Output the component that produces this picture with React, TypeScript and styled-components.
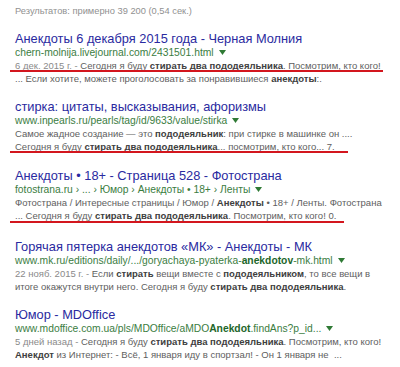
import React from "react";
import styled, { createGlobalStyle } from "styled-components";

const Global = createGlobalStyle`
  html, body { margin: 0; padding: 0; background: #fff; }
  body { font-family: "Liberation Sans", Arial, sans-serif; }
`;

const Page = styled.div`
  width: 400px;
  height: 367px;
  overflow: hidden;
  box-sizing: border-box;
  padding: 5px 0 0 15px;
  display: flex;
  flex-direction: column;
`;

const Stats = styled.div`
  font-size: 9.3px;
  line-height: 13px;
  color: #919191;
  white-space: nowrap;
`;

const Result = styled.div<{ $top: number }>`
  margin-top: ${(p) => p.$top}px;
  display: flex;
  flex-direction: column;
`;

const Title = styled.div`
  font-size: 12.8px;
  line-height: 14px;
  color: #2a2aa0;
  white-space: nowrap;
`;

const Url = styled.div`
  font-size: 10.3px;
  line-height: 13px;
  color: #3b7d3f;
  white-space: nowrap;
  display: flex;
  align-items: center;
  b { color: #22662a; }
`;

const Arrow = styled.svg`
  margin-left: 5px;
  width: 7px;
  height: 5px;
  flex: none;
`;

const Line = styled.div<{ $mark?: number; $markTop?: number }>`
  position: relative;
  font-size: 9.5px;
  line-height: 13px;
  color: #5e5e5e;
  white-space: nowrap;
  b { color: #404040; }
  ${(p) =>
    p.$mark
      ? `&::after {
    content: "";
    position: absolute;
    left: -5px;
    top: ${p.$markTop ?? 13}px;
    width: ${p.$mark}px;
    height: 2px;
    background: #d3161e;
  }`
      : ""}
`;

const Date = styled.span`
  color: #8a8a8a;
`;

const Caret = () => (
  <Arrow viewBox="0 0 7 5">
    <path d="M0 0 L7 0 L3.5 5 Z" fill="#2f7a35" />
  </Arrow>
);

export default function App() {
  return (
    <>
      <Global />
      <Page>
        <Stats>Результатов: примерно 39 200 (0,54 сек.)</Stats>

        <Result $top={14}>
          <Title>Анекдоты 6 декабря 2015 года - Черная Молния</Title>
          <Url>
            chern-molnija.livejournal.com/2431501.html
            <Caret />
          </Url>
          <Line $mark={373} $markTop={11}>
            <Date>6 дек. 2015 г. - </Date>Сегодня я буду <b>стирать два пододеяльника</b>. Посмотрим, кто кого!
          </Line>
          <Line>
            ... Если хотите, можете проголосовать за понравившиеся <b>анекдоты</b>:.
          </Line>
        </Result>

        <Result $top={15}>
          <Title>стирка: цитаты, высказывания, афоризмы</Title>
          <Url>
            www.inpearls.ru/pearls/tag/id/9633/value/stirka
            <Caret />
          </Url>
          <Line>
            Самое жадное создание — это <b>пододеяльник</b>: при стирке в машинке он ....
          </Line>
          <Line $mark={338} $markTop={11}>
            Сегодня я буду <b>стирать два пододеяльника</b>... посмотрим, кто кого... 7.
          </Line>
        </Result>

        <Result $top={16}>
          <Title>Анекдоты • 18+ - Страница 528 - Фотострана</Title>
          <Url>
            fotostrana.ru › ... › Юмор › Анекдоты • 18+ › Ленты
            <Caret />
          </Url>
          <Line>
            Фотострана / Интересные страницы / Юмор / <b>Анекдоты</b> • 18+ / Ленты. Фотострана
          </Line>
          <Line $mark={334} $markTop={12}>
            ... Сегодня я буду <b>стирать два пододеяльника</b>. Посмотрим, кто кого! 0.
          </Line>
        </Result>

        <Result $top={18}>
          <Title>Горячая пятерка анекдотов «МК» - Анекдоты - МК</Title>
          <Url>
            www.mk.ru/editions/daily/.../goryachaya-pyaterka-<b>anekdotov</b>-mk.html
            <Caret />
          </Url>
          <Line>
            <Date>22 нояб. 2015 г. - </Date>Если <b>стирать</b> вещи вместе с <b>пододеяльником</b>, то все вещи в
          </Line>
          <Line>
            итоге окажутся внутри него. Сегодня я буду <b>стирать два пододеяльника</b>.
          </Line>
        </Result>

        <Result $top={15}>
          <Title>Юмор - MDOffice</Title>
          <Url>
            www.mdoffice.com.ua/pls/MDOffice/aMDO<b>Anekdot</b>.findAns?p_id...
            <Caret />
          </Url>
          <Line>
            <Date>5 дней назад - </Date>Сегодня я буду <b>стирать два пододеяльника</b>. Посмотрим, кто кого!
          </Line>
          <Line>
            <b>Анекдот</b> из Интернет: - Всё, 1 января иду в спортзал! - Он 1 января не&nbsp; ...
          </Line>
        </Result>
      </Page>
    </>
  );
}
